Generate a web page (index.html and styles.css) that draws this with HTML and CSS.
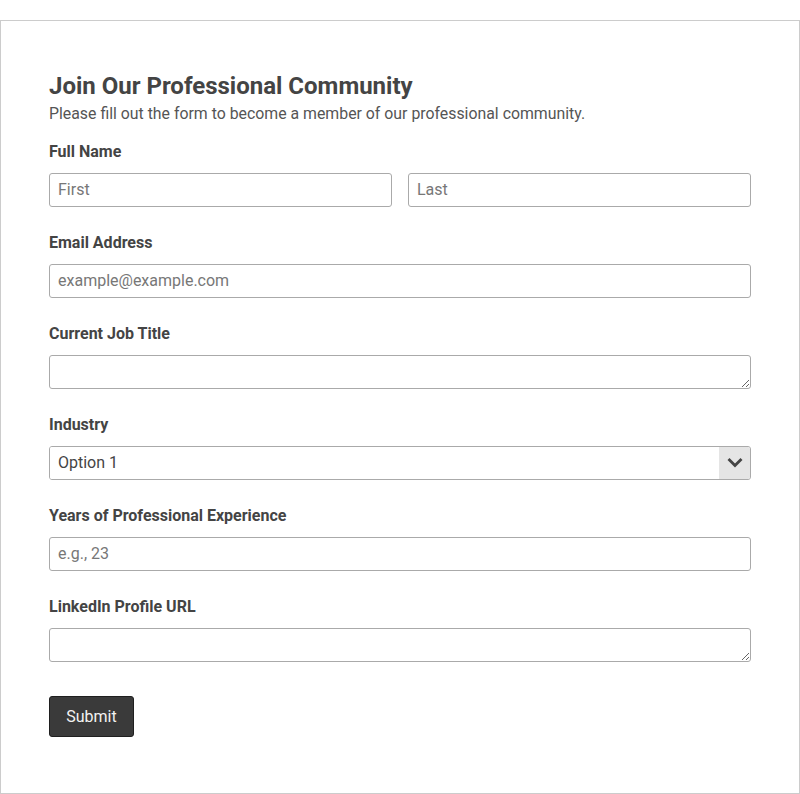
FILE: index.html
```html
<!DOCTYPE html>
<html lang="en">
<head>
<meta charset="utf-8">
<title>Join Our Professional Community</title>
<link rel="stylesheet" href="styles.css">
</head>
<body>
<form class="card">
  <h1 class="title">Join Our Professional Community</h1>
  <p class="subtitle">Please fill out the form to become a member of our professional community.</p>

  <div class="group">
    <label class="label">Full Name</label>
    <div class="row">
      <input class="field" type="text" placeholder="First">
      <input class="field" type="text" placeholder="Last">
    </div>
  </div>

  <div class="group">
    <label class="label">Email Address</label>
    <input class="field" type="email" placeholder="example@example.com">
  </div>

  <div class="group">
    <label class="label">Current Job Title</label>
    <textarea class="field area"></textarea>
  </div>

  <div class="group">
    <label class="label">Industry</label>
    <div class="select-wrap">
      <select class="select">
        <option>Option 1</option>
        <option>Option 2</option>
      </select>
      <span class="arrow">
        <svg width="16" height="16" viewBox="0 0 16 16"><polyline points="2.5,5 8,10.5 13.5,5" fill="none" stroke="#444" stroke-width="2.8" stroke-linecap="square"/></svg>
      </span>
    </div>
  </div>

  <div class="group">
    <label class="label">Years of Professional Experience</label>
    <input class="field" type="text" placeholder="e.g., 23">
  </div>

  <div class="group">
    <label class="label">LinkedIn Profile URL</label>
    <textarea class="field area"></textarea>
  </div>

  <button class="submit" type="button">Submit</button>
</form>
</body>
</html>
```
FILE: styles.css
```css
html, body {
  margin: 0;
  padding: 0;
  background: #fff;
}
body {
  font-family: Roboto, "Liberation Sans", sans-serif;
  color: #444;
  padding-top: 20px;
}
.card {
  box-sizing: border-box;
  width: 800px;
  height: 774px;
  border: 1px solid #ccc;
  padding: 51px 48px 0 48px;
  display: flex;
  flex-direction: column;
}
.title {
  margin: 0;
  font-size: 24px;
  font-weight: 700;
  line-height: 28px;
  color: #444;
}
.subtitle {
  margin: 4px 0 0 0;
  font-size: 15.85px;
  line-height: 19px;
  color: #555;
}
.group {
  display: flex;
  flex-direction: column;
  margin-top: 19px;
}
.group + .group {
  margin-top: 26px;
}
.label {
  font-size: 16px;
  font-weight: 700;
  line-height: 19px;
  margin-bottom: 12px;
  color: #444;
}
.row {
  display: flex;
  gap: 16px;
}
.row .field {
  flex: 1;
  min-width: 0;
}
.field {
  box-sizing: border-box;
  height: 34px;
  border: 1px solid #aaa;
  border-radius: 3px;
  padding: 0 8px 2px 8px;
  font-family: Roboto, "Liberation Sans", sans-serif;
  font-size: 16px;
  color: #444;
  background: #fff;
  outline: none;
}
.field::placeholder {
  color: #777;
}
.area {
  resize: vertical;
  padding: 6px 8px;
  display: block;
}
.select-wrap {
  position: relative;
  display: flex;
  box-sizing: border-box;
  height: 34px;
  border: 1px solid #aaa;
  border-radius: 3px;
  overflow: hidden;
}
.select {
  flex: 1;
  appearance: none;
  -webkit-appearance: none;
  border: none;
  background: #fff;
  font-family: Roboto, "Liberation Sans", sans-serif;
  font-size: 16px;
  color: #444;
  padding: 0 8px 2px 8px;
  outline: none;
}
.arrow {
  width: 31px;
  background: #e5e5e5;
  display: flex;
  align-items: center;
  justify-content: center;
  pointer-events: none;
}
.submit {
  align-self: flex-start;
  margin-top: 34px;
  width: 85px;
  height: 41px;
  background: #3a3a3a;
  border: 1px solid #1f1f1f;
  border-radius: 3px;
  color: #f2f2f2;
  font-family: Roboto, "Liberation Sans", sans-serif;
  font-size: 16px;
  cursor: pointer;
}
```
